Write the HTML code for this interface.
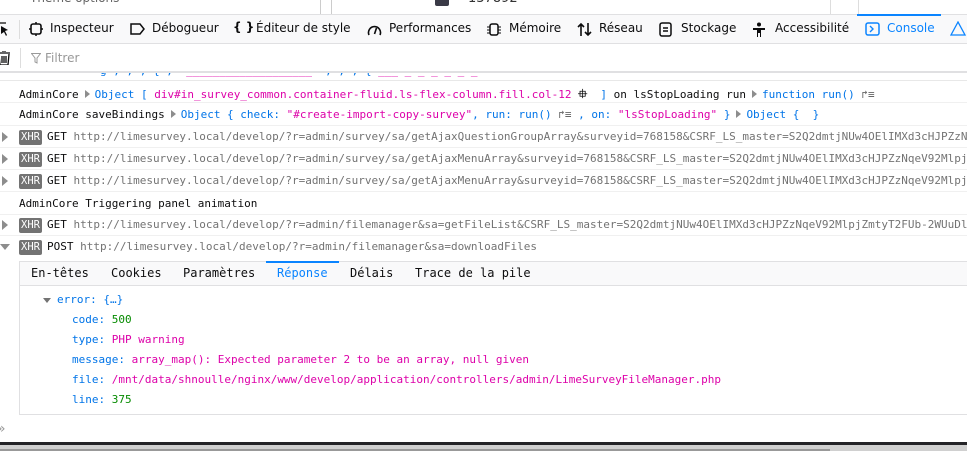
<!DOCTYPE html>
<html><head><meta charset="utf-8"><style>
*{margin:0;padding:0;box-sizing:border-box}
body{width:967px;height:451px;overflow:hidden;background:#fff;position:relative;font-family:"DejaVu Sans","Liberation Sans",sans-serif;}
.abs{position:absolute}
.mono{font-family:"DejaVu Sans Mono","Liberation Mono",monospace;font-size:11px;white-space:nowrap}
.tb{top:14px;left:0;width:967px;height:30px;background:#f9f9fa;border-top:1px solid #e0e0e2;border-bottom:1px solid #e0e0e2}
.tab{position:absolute;top:6px;font-size:12px;color:#0c0c0d;white-space:nowrap}
.row{position:absolute;left:0;width:967px;height:22px;border-bottom:1px solid #f0f0f0}
.row .t{position:absolute;left:19px;top:4px}
.xhr{display:inline-block;background:#737373;color:#fff;border-radius:2px;padding:0 2px;height:15px;line-height:15px;font-size:10.5px;margin-right:5px}
.tri{position:absolute;left:2px;top:6px;width:0;height:0;border-top:5px solid transparent;border-bottom:5px solid transparent;border-left:6px solid #8d8d8d}
.url{color:#737373}
.b{color:#0074e8}.m{color:#dd00a9}.g{color:#058b00}.k{color:#0c0c0d}
.st{display:inline-block;width:0;height:0;border-top:4px solid transparent;border-bottom:4px solid transparent;border-left:5px solid #8d8d8d;margin:0 5px 0 6px}
</style></head><body>
<div class="abs" style="top:0;left:0;width:967px;height:14px;background:#fff"></div>
<div class="abs" style="top:0;left:320px;width:1px;height:14px;background:#ccc"></div>
<div class="abs" style="top:0;left:331px;width:1px;height:14px;background:#ccc"></div>
<div class="abs" style="top:0;left:435px;width:14px;height:6px;background:#3a3a46;border-radius:0 0 2px 2px"></div>
<div class="abs" style="top:-9px;left:468px;font-size:13px;color:#333">137892</div>
<div class="abs" style="top:-9px;left:30px;font-size:12px;color:#666">Theme options</div>
<div class="abs" style="top:0;left:830px;width:1px;height:14px;background:#ddd"></div>
<div class="abs tb">
 <svg class="abs" style="left:-3px;top:7px" width="12" height="14"><path d="M1 1h8M1 1v8" stroke="#333" stroke-width="1.5" fill="none"/><path d="M4 4l7 4-3 1 2 4-1 1-2-4-3 2z" fill="#0c0c0d"/></svg>
 <div class="abs" style="left:19px;top:5px;width:1px;height:19px;background:#ddd"></div>
 <svg class="abs" style="left:29px;top:7px" width="14" height="14"><rect x="2" y="2" width="10" height="10" rx="2" fill="none" stroke="#0c0c0d" stroke-width="1.6"/><path d="M7 0v2M7 12v2M0 7h2M12 7h2" stroke="#0c0c0d" stroke-width="1.5"/></svg>
 <div class="tab" style="left:50px">Inspecteur</div>
 <svg class="abs" style="left:130px;top:8px" width="16" height="12"><path d="M1 1h9l4 5-4 5H1z" fill="none" stroke="#0c0c0d" stroke-width="1.5"/></svg>
 <div class="tab" style="left:152px">Débogueur</div>
 <div class="tab" style="left:233px;font-weight:bold;top:5px">{ }</div>
 <div class="tab" style="left:256px">Éditeur de style</div>
 <svg class="abs" style="left:367px;top:8px" width="15" height="14"><path d="M2 12A6 6 0 1 1 13 12" fill="none" stroke="#0c0c0d" stroke-width="1.6"/><path d="M7.5 11l2-6" stroke="#0c0c0d" stroke-width="1.6"/></svg>
 <div class="tab" style="left:389px">Performances</div>
 <svg class="abs" style="left:487px;top:7px" width="14" height="15"><rect x="3" y="2" width="8" height="11" rx="2" fill="none" stroke="#0c0c0d" stroke-width="1.5"/><path d="M0 5h3M0 8h3M0 11h3M11 5h3M11 8h3M11 11h3" stroke="#0c0c0d"/></svg>
 <div class="tab" style="left:509px">Mémoire</div>
 <svg class="abs" style="left:577px;top:7px" width="16" height="15"><path d="M4 14V2M1 5l3-3 3 3M11 1v12M8 10l3 3 3-3" fill="none" stroke="#0c0c0d" stroke-width="1.6"/></svg>
 <div class="tab" style="left:599px">Réseau</div>
 <svg class="abs" style="left:659px;top:7px" width="14" height="15"><rect x="1" y="1" width="11" height="13" rx="2" fill="none" stroke="#0c0c0d" stroke-width="1.5"/><path d="M4 6h5M4 9h5" stroke="#0c0c0d" stroke-width="1.4"/></svg>
 <div class="tab" style="left:681px">Stockage</div>
 <svg class="abs" style="left:752px;top:7px" width="14" height="16"><circle cx="7" cy="2.5" r="2" fill="#0c0c0d"/><path d="M1 6h12v2H9v7H8v-4H6v4H5V8H1z" fill="#0c0c0d"/></svg>
 <div class="tab" style="left:775px">Accessibilité</div>
 <div class="abs" style="left:857px;top:-1px;width:84px;height:2px;background:#0a84ff"></div>
 <svg class="abs" style="left:865px;top:7px" width="15" height="14"><rect x="1" y="1" width="13" height="12" rx="2" fill="none" stroke="#0a84ff" stroke-width="1.5"/><path d="M5 4l3 3-3 3" fill="none" stroke="#0a84ff" stroke-width="1.4"/></svg>
 <div class="tab" style="left:887px;color:#0a84ff">Console</div>
 <svg class="abs" style="left:950px;top:6px" width="17" height="15"><path d="M8 1L1 14h14z" fill="none" stroke="#0a84ff" stroke-width="1.3"/></svg>
</div>
<div class="abs" style="top:0;left:858px;width:109px;height:14px;background:#fff;border-left:1px solid #ddd"></div>
<div class="abs" style="top:44px;left:0;width:967px;height:28px;background:#fff;border-bottom:1px solid #e0e0e2"></div>
<svg class="abs" style="left:-2px;top:51px" width="12" height="14"><path d="M0 2h12M4 0h4M1 3l1 11h8l1-11M4 5v7M6 5v7M8 5v7" fill="none" stroke="#0c0c0d" stroke-width="1.3"/></svg>
<div class="abs" style="left:20px;top:48px;width:1px;height:20px;background:#ddd"></div>
<svg class="abs" style="left:31px;top:53px" width="10" height="11"><path d="M0.5 0.5h9L6 5v5l-2-1V5z" fill="none" stroke="#999"/></svg>
<div class="abs" style="left:45px;top:51px;font-size:12px;color:#999">Filtrer</div>
<div class="abs" style="top:72px;left:0;width:967px;height:9px;border-bottom:1px solid #e8e8e8;overflow:hidden"><div class="mono" style="position:absolute;left:100px;top:-8px;color:#0074e8">g , , , { , <span class="m">"___________________"</span> , , , { <span class="m">___ _ _ _ _ _ _</span></div></div>
<div class="abs" style="top:72px;left:0;width:967px;height:1px;background:#e0e0e2"></div>
<div class="row mono" style="top:81px"><span class="t k">AdminCore<span class="st"></span><span class="b">Object [ </span><span class="m">div#in_survey_common.container-fluid.ls-flex-column.fill.col-12</span> <b style="font-size:12px">⯐</b> <span class="b">&nbsp;]</span> on lsStopLoading run<span class="st"></span><span class="b">function run()</span> <span style="color:#666">↱≡</span></span></div>
<div class="row mono" style="top:104px"><span class="t k">AdminCore saveBindings<span class="st"></span><span class="b">Object { check: </span><span class="m">"#create-import-copy-survey"</span><span class="b">, run: run()</span> <span style="color:#666">↱≡</span> <span class="b">, on: </span><span class="m">"lsStopLoading"</span> <span class="b">}</span><span class="st"></span><span class="b">Object {&nbsp; }</span></span></div>
<div class="row mono" style="top:126px"><div class="tri"></div><span class="t k"><span class="xhr">XHR</span>GET <span class="url">http://limesurvey.local/develop/?r=admin/survey/sa/getAjaxQuestionGroupArray&amp;surveyid=768158&amp;CSRF_LS_master=S2Q2dmtjNUw4OElIMXd3cHJPZzN</span></span></div>
<div class="row mono" style="top:148px"><div class="tri"></div><span class="t k"><span class="xhr">XHR</span>GET <span class="url">http://limesurvey.local/develop/?r=admin/survey/sa/getAjaxMenuArray&amp;surveyid=768158&amp;CSRF_LS_master=S2Q2dmtjNUw4OElIMXd3cHJPZzNqeV92Mlpj</span></span></div>
<div class="row mono" style="top:170px"><div class="tri"></div><span class="t k"><span class="xhr">XHR</span>GET <span class="url">http://limesurvey.local/develop/?r=admin/survey/sa/getAjaxMenuArray&amp;surveyid=768158&amp;CSRF_LS_master=S2Q2dmtjNUw4OElIMXd3cHJPZzNqeV92Mlpj</span></span></div>
<div class="row mono" style="top:193px"><span class="t k">AdminCore Triggering panel animation</span></div>
<div class="row mono" style="top:214px"><div class="tri"></div><span class="t k"><span class="xhr">XHR</span>GET <span class="url">http://limesurvey.local/develop/?r=admin/filemanager&amp;sa=getFileList&amp;CSRF_LS_master=S2Q2dmtjNUw4OElIMXd3cHJPZzNqeV92MlpjZmtyT2FUb-2WUuDl</span></span></div>
<div class="row mono" style="top:236px;border:none"><div class="abs" style="left:0;top:8px;border-left:5px solid transparent;border-right:5px solid transparent;border-top:6px solid #8d8d8d"></div><span class="t k"><span class="xhr">XHR</span>POST <span class="url">http://limesurvey.local/develop/?r=admin/filemanager&amp;sa=downloadFiles</span></span></div>
<div class="abs" style="left:19px;top:261px;width:948px;height:154px;border-left:1px solid #e0e0e2;border-top:1px solid #e0e0e2;border-bottom:1px solid #e0e0e2"></div>
<div class="abs" style="left:20px;top:262px;width:947px;height:24px;background:#f9f9fa;border-bottom:1px solid #e0e0e2"></div>
<div class="abs" style="left:266px;top:261px;width:73px;height:2px;background:#0a84ff"></div>
<div class="abs mono" style="top:266px;left:31px;font-size:12px;color:#0c0c0d">En-têtes</div>
<div class="abs mono" style="top:266px;left:111px;font-size:12px;color:#0c0c0d">Cookies</div>
<div class="abs mono" style="top:266px;left:183px;font-size:12px;color:#0c0c0d">Paramètres</div>
<div class="abs mono" style="top:266px;left:277px;font-size:12px;color:#0a84ff">Réponse</div>
<div class="abs mono" style="top:266px;left:350px;font-size:12px;color:#0c0c0d">Délais</div>
<div class="abs mono" style="top:266px;left:415px;font-size:12px;color:#0c0c0d">Trace de la pile</div>
<div class="abs" style="left:43px;top:298px;border-left:4px solid transparent;border-right:4px solid transparent;border-top:5px solid #737373"></div>
<div class="abs mono b" style="left:57px;top:293px">error: {…}</div>
<div class="abs mono" style="left:72px;top:313px"><span class="b">code:</span> <span class="g">500</span></div>
<div class="abs mono" style="left:72px;top:333px"><span class="b">type:</span> <span class="m">PHP warning</span></div>
<div class="abs mono" style="left:72px;top:353px"><span class="b">message:</span> <span class="m">array_map(): Expected parameter 2 to be an array, null given</span></div>
<div class="abs mono" style="left:72px;top:373px"><span class="b">file:</span> <span class="m">/mnt/data/shnoulle/nginx/www/develop/application/controllers/admin/LimeSurveyFileManager.php</span></div>
<div class="abs mono" style="left:72px;top:393px"><span class="b">line:</span> <span class="g">375</span></div>
<div class="abs" style="left:-3px;top:421px;font-size:14px;color:#999">»</div>
<div class="abs" style="left:0;top:442px;width:967px;height:3px;background:#232327"></div>
<div class="abs" style="left:0;top:445px;width:967px;height:6px;background:#d0d0d0"></div>
<div class="abs" style="left:0;top:449px;width:830px;height:2px;background:#999"></div>
</body></html>
